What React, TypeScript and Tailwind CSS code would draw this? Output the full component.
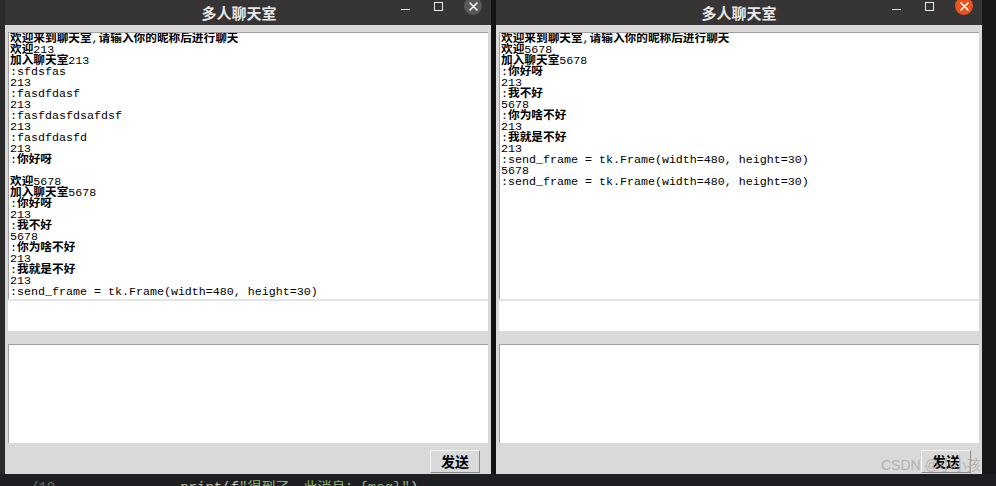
import React from 'react';

const LEFT_LINES = [
  '欢迎来到聊天室,请输入你的昵称后进行聊天',
  '欢迎213',
  '加入聊天室213',
  ':sfdsfas',
  '213',
  ':fasdfdasf',
  '213',
  ':fasfdasfdsafdsf',
  '213',
  ':fasdfdasfd',
  '213',
  ':你好呀',
  '',
  '欢迎5678',
  '加入聊天室5678',
  ':你好呀',
  '213',
  ':我不好',
  '5678',
  ':你为啥不好',
  '213',
  ':我就是不好',
  '213',
  ':send_frame = tk.Frame(width=480, height=30)',
];

const RIGHT_LINES = [
  '欢迎来到聊天室,请输入你的昵称后进行聊天',
  '欢迎5678',
  '加入聊天室5678',
  ':你好呀',
  '213',
  ':我不好',
  '5678',
  ':你为啥不好',
  '213',
  ':我就是不好',
  '213',
  ':send_frame = tk.Frame(width=480, height=30)',
  '5678',
  ':send_frame = tk.Frame(width=480, height=30)',
];

// CJK runs look bold in the Tk font, latin stays regular
const renderLine = (s: string) =>
  s.split(/([\u4e00-\u9fff]+)/).map((part, i) =>
    /[\u4e00-\u9fff]/.test(part) ? (
      <span key={i} className="font-bold leading-[11px]">{part}</span>
    ) : (
      <span key={i}>{part}</span>
    )
  );

const ChatWindow: React.FC<{ lines: string[]; active?: boolean; titleShift?: string }> = ({ lines, active, titleShift }) => (
  <div className="w-[486px] h-[474px] flex flex-col shrink-0">
    {/* Title bar */}
    <div className="relative h-[25px] bg-[#363434] flex items-center justify-center">
      <span
        className={`text-[15px] font-bold text-[#e8e8e8] leading-none ${titleShift ?? ''}`}
        style={{ fontFamily: '"Noto Sans CJK SC", sans-serif' }}
      >
        多人聊天室
      </span>
      <div className="absolute right-[9px] top-0 h-[16px] flex items-center">
        <div className="w-[9px] h-[1px] bg-[#e0e0e0] mr-[24px] mt-[2px]" />
        <div className="w-[9px] h-[9px] border border-[#e8e8e8] mr-[21px] mb-[3px]" />
        <div
          className={`w-[18px] h-[18px] rounded-full flex items-center justify-center -mt-[4px] ${active ? 'bg-[#e95420]' : 'bg-[#5a5858]'}`}
        >
          <svg width="9" height="9" viewBox="0 0 9 9">
            <path d="M1 1L8 8M8 1L1 8" stroke="#ffffff" strokeWidth="1.6" strokeLinecap="round" />
          </svg>
        </div>
      </div>
    </div>

    {/* Body */}
    <div className="flex-1 bg-[#d9d9d9] flex flex-col pt-[7px] pl-[3px] pr-[3px]">
      <div
        className="h-[267px] bg-white border-t border-l border-[#a0a0a0] pt-[1px] pl-[1px] overflow-hidden text-black text-[11.67px] leading-[11px] whitespace-pre"
        style={{ fontFamily: '"Liberation Mono", "Noto Sans CJK SC", monospace' }}
      >
        {lines.map((l, i) => (
          <div key={i} className="h-[11px]">{renderLine(l)}</div>
        ))}
      </div>
      <div className="h-[2px] bg-[#e4e4e4]" />
      <div className="h-[30px] bg-white" />
      <div className="h-[13px]" />
      <div className="h-[99px] bg-white border-t border-l border-[#a0a0a0]" />
      <div className="flex justify-end pt-[7px] pr-[8px]">
        <button
          className="w-[50px] h-[23px] bg-[#d9d9d9] border border-t-[#f4f4f4] border-l-[#f4f4f4] border-b-[#8a8a8a] border-r-[#8a8a8a] text-[14px] font-bold text-black flex items-center justify-center"
          style={{ fontFamily: '"Noto Sans CJK SC", sans-serif' }}
        >
          发送
        </button>
      </div>
    </div>
  </div>
);

const App: React.FC = () => {
  return (
    <div className="relative w-[996px] h-[486px] bg-[#1b1b1d] overflow-hidden">
      <div className="flex h-[474px]">
        <div className="w-[5px] bg-[#2a2a2a]" />
        <ChatWindow lines={LEFT_LINES} titleShift="-ml-[18px]" />
        <div className="w-[5px] bg-[#121212]" />
        <ChatWindow lines={RIGHT_LINES} active />
        <div className="flex-1 bg-[#18181a]" />
      </div>

      {/* editor peeking out below */}
      <div
        className="h-[12px] bg-[#1e1f22] flex items-start overflow-hidden text-[14px] leading-none pt-[7px]"
        style={{ fontFamily: '"Liberation Mono", "Noto Sans CJK SC", monospace' }}
      >
        <span className="ml-[30px] text-[#6b6b6b]">/10</span>
        <span className="ml-[125px] text-[#d4c6a0]">print</span>
        <span className="text-[#c0c0c0]">(f</span>
        <span className="text-[#8fb573]">"得到了，此消息：{'{msg}'}"</span>
        <span className="text-[#c0c0c0]">)</span>
      </div>

      {/* CSDN watermark */}
      <div
        className="absolute left-[881px] top-[458px] text-[14px] text-[#a8a8a8]/80 leading-none"
        style={{ fontFamily: '"Liberation Sans", "Noto Sans CJK SC", sans-serif' }}
      >
        CSDN @小小孩
      </div>
    </div>
  );
};

export default App;
